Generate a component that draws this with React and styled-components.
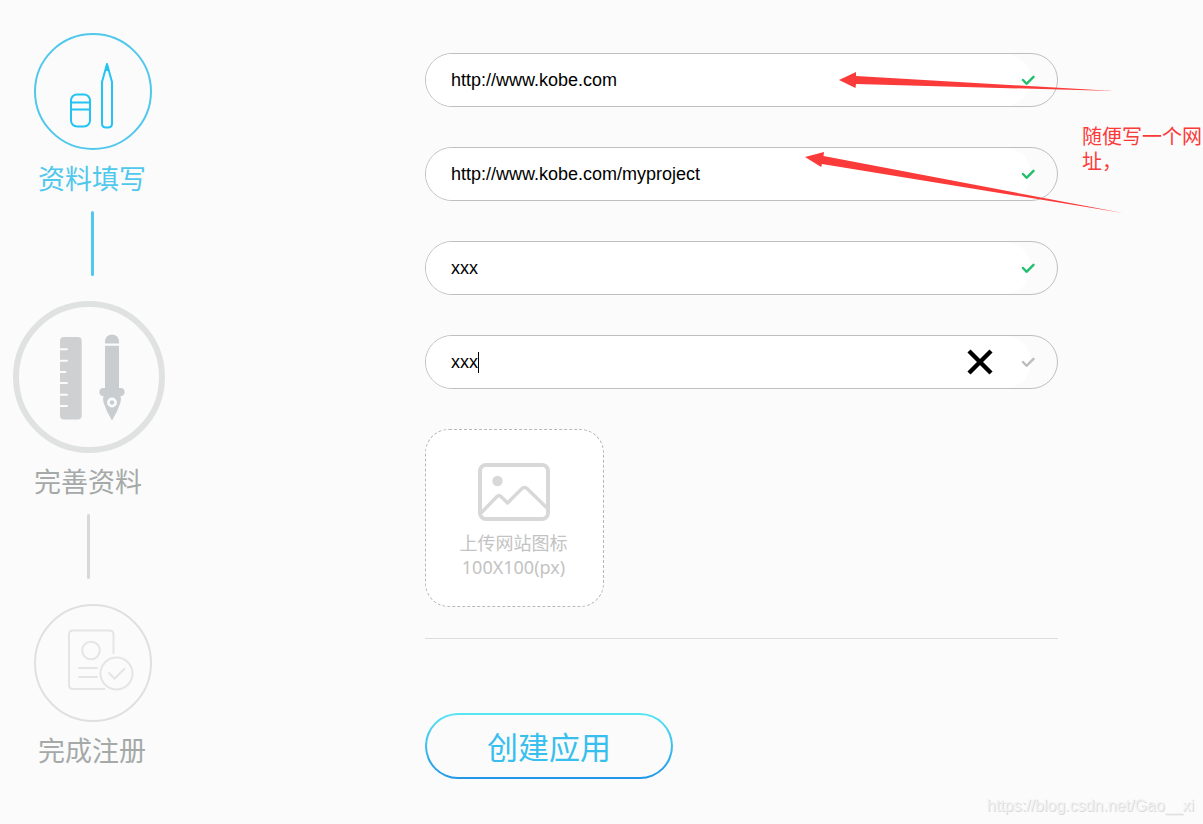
import React, { useState } from "react";
import styled, { createGlobalStyle } from "styled-components";

const GlobalStyle = createGlobalStyle`
  * { box-sizing: border-box; }
  body {
    margin: 0;
    background: #fbfbfb;
    color: #000;
    font-family: "Liberation Sans", "Noto Sans CJK SC", sans-serif;
    overflow-x: hidden;
  }
`;

const Page = styled.div`
  position: relative;
  display: flex;
  align-items: flex-start;
  min-height: 100vh;
`;

const Steps = styled.ol`
  flex: none;
  width: 186px;
  margin: 0;
  padding: 32px 0 0;
  list-style: none;
`;

const Step = styled.li`
  display: flex;
  flex-direction: column;
  align-items: center;
  padding-right: ${(p) => (p.$large ? 8 : 0)}px;
  color: ${(p) => (p.$active ? "#50c8ec" : "#a5a9a8")};
`;

const StepIcon = styled.svg`
  display: block;
  width: ${(p) => p.$size}px;
  height: ${(p) => p.$size}px;
  fill: none;
  stroke-linecap: round;
  stroke-linejoin: round;
`;

const StepLabel = styled.span`
  margin-top: 8px;
  padding-right: 2px;
  font-size: 27px;
  line-height: 40px;
  font-family: "Noto Sans CJK SC", sans-serif;
`;

const Connector = styled.span`
  width: 3px;
  height: 65px;
  margin: 13px 2px 25px 0;
  border-radius: 2px;
  background: ${(p) => (p.$active ? "#50c8ec" : "#d8d8d8")};
`;

const Form = styled.form`
  position: relative;
  flex: 1;
  min-width: 0;
  margin: 53px 145px 46px 239px;
`;

const Fields = styled.div`
  display: flex;
  flex-direction: column;
  gap: 40px;
`;

const Field = styled.div`
  position: relative;
  display: flex;
  height: 54px;
  padding-right: 26px;
  border: 1px solid #bfbfbf;
  border-radius: 27px;
`;

const FieldInner = styled.div`
  flex: 1;
  min-width: 0;
  display: flex;
  align-items: center;
  padding: 0 34px 0 25px;
  border-radius: 26px;
  background: #fff;
`;

const TextInput = styled.input`
  flex: ${(p) => (p.$editing ? "none" : 1)};
  field-sizing: ${(p) => (p.$editing ? "content" : "fixed")};
  min-width: 0;
  max-width: 100%;
  height: 50px;
  padding: 0;
  border: 0;
  outline: 0;
  background: transparent;
  color: #000;
  font: 18px "Liberation Sans", sans-serif;
`;

const Caret = styled.span`
  width: 1px;
  height: 21px;
  background: #000;
`;

const ClearButton = styled.button`
  display: flex;
  margin-left: auto;
  padding: 4px;
  border: 0;
  background: none;
  cursor: pointer;
`;

const Tick = styled.svg`
  position: absolute;
  top: 20px;
  right: 22px;
  width: 14px;
  height: 12px;
  fill: none;
  stroke: ${(p) => (p.$valid ? "#22bf6c" : "#bdbdbd")};
  stroke-width: 2.4;
  stroke-linecap: round;
  stroke-linejoin: round;
`;

const Upload = styled.button`
  display: flex;
  flex-direction: column;
  align-items: center;
  align-self: flex-start;
  width: 179px;
  height: 178px;
  padding: 33px 2px 0 0;
  border: 1px dashed #b8b8b8;
  border-radius: 24px;
  background: #fff;
  color: #c3c3c3;
  font-family: "Noto Sans", "Noto Sans CJK SC", sans-serif;
  font-size: 18px;
  line-height: 24px;
  cursor: pointer;
`;

const PictureIcon = styled.svg`
  width: 72px;
  height: 58px;
  margin-bottom: 10px;
  fill: none;
  stroke: #d8d8d8;
  stroke-width: 4;
  stroke-linejoin: round;
`;

const Divider = styled.hr`
  margin: 31px 0 74px;
  border: 0;
  border-top: 1px solid #dcdcdc;
`;

const SubmitButton = styled.button`
  width: 248px;
  height: 66px;
  padding: 0;
  border: 2px solid transparent;
  border-radius: 33px;
  background:
    linear-gradient(#fbfbfb, #fbfbfb) padding-box,
    linear-gradient(#58e6f2, #2196e8) border-box;
  color: #38bfee;
  font-family: "Noto Sans CJK SC", sans-serif;
  font-size: 31px;
  line-height: 40px;
  cursor: pointer;
`;

const Arrows = styled.svg`
  position: absolute;
  top: 17px;
  right: -67px;
  width: 320px;
  height: 145px;
  fill: #fb3a3a;
  pointer-events: none;
`;

const Note = styled.p`
  position: absolute;
  top: 70px;
  right: -145px;
  width: 121px;
  margin: 0;
  color: #fb3a3a;
  font-family: "Noto Sans CJK SC", serif;
  font-size: 20px;
  line-height: 25px;
`;

const Watermark = styled.span`
  position: absolute;
  right: 9px;
  bottom: 9px;
  color: #f2f2f2;
  font-size: 16px;
  line-height: 20px;
  text-shadow: 1px 1px 0 #dadada;
`;

function StationeryIcon() {
  return (
    <StepIcon $size={118} viewBox="34 32 118 118" stroke="#21c4f3" strokeWidth="2" aria-hidden="true">
      <ellipse cx="93" cy="91.500" rx="58" ry="57.500" stroke="#50c8ec" />
      <rect x="71" y="94.500" width="19" height="32" rx="6" />
      <path d="M71 102.500h19M71 109.500h19" />
      <path d="M102 82v41.500q0 4 4 4h2q4 0 4-4V82L107 64z" />
      <path d="M105 71L107 63l2 8z" fill="#21c4f3" stroke="none" />
    </StepIcon>
  );
}

function DraftingIcon() {
  return (
    <StepIcon $size={152} viewBox="13 301 152 152" aria-hidden="true">
      <circle cx="89" cy="377" r="73" stroke="#e0e2e1" strokeWidth="6" />
      <rect x="60" y="337" width="21.700" height="82.500" rx="4" fill="#cfd0d2" />
      <path
        d="M60 349.300h7M60 360.700h7M60 372h5.500M60 383h7M60 394.700h7M60 406h7"
        stroke="#fbfbfb"
        strokeWidth="2"
      />
      <g fill="#c9cdd0">
        <path d="M105 343.500v-2a7 7 0 0 1 14 0v2z" />
        <path d="M105 345.800h14V388h1.500a4 4 0 0 1 0 8.200q1 3 0 6.300-3 9-8.500 18-5.500-9-8.500-18-1-3.300 0-6.300a4 4 0 0 1 0-8.200h1.500z" />
      </g>
      <circle cx="112" cy="402.500" r="3.600" stroke="#fbfbfb" strokeWidth="2.600" />
    </StepIcon>
  );
}

function RegisteredIcon() {
  return (
    <StepIcon $size={118} viewBox="34 604 118 118" stroke="#e5e5e5" strokeWidth="2" aria-hidden="true">
      <circle cx="93" cy="663" r="58" stroke="#e0e0e0" />
      <path d="M113.500 653v-18.500q0-4-4-4H73q-4 0-4 4V685q0 4 4 4h31.500" />
      <circle cx="91" cy="650.500" r="8.800" />
      <path d="M79 668h18M79 677h18" />
      <circle cx="116.500" cy="673.500" r="16" />
      <path d="M109 673l5.500 5.800 10-10" />
    </StepIcon>
  );
}

function ValidatedField({ label, initial, valid, editing }) {
  const [value, setValue] = useState(initial);
  return (
    <Field>
      <FieldInner>
        <TextInput
          type="text"
          aria-label={label}
          value={value}
          $editing={editing}
          onChange={(e) => setValue(e.target.value)}
        />
        {editing && <Caret />}
        {editing && (
          <ClearButton type="button" aria-label="清除" onClick={() => setValue("")}>
            <svg width="26" height="26" viewBox="0 0 26 26" stroke="#000" strokeWidth="4.400" aria-hidden="true">
              <path d="M2 2l22 22M24 2L2 24" />
            </svg>
          </ClearButton>
        )}
      </FieldInner>
      <Tick $valid={valid} viewBox="0 0 14 12" aria-hidden="true">
        <path d="M2 6l3.500 3.800L12.500 2.800" />
      </Tick>
    </Field>
  );
}

export default function App() {
  return (
    <>
      <GlobalStyle />
      <Page>
        <Steps>
          <Step $active>
            <StationeryIcon />
            <StepLabel>资料填写</StepLabel>
            <Connector $active />
          </Step>
          <Step $large>
            <DraftingIcon />
            <StepLabel>完善资料</StepLabel>
            <Connector />
          </Step>
          <Step>
            <RegisteredIcon />
            <StepLabel>完成注册</StepLabel>
          </Step>
        </Steps>
        <Form onSubmit={(e) => e.preventDefault()}>
          <Fields>
            <ValidatedField label="网站地址" initial="http://www.kobe.com" valid />
            <ValidatedField label="回调地址" initial="http://www.kobe.com/myproject" valid />
            <ValidatedField label="提供方" initial="xxx" valid />
            <ValidatedField label="备案号" initial="xxx" editing />
            <Upload type="button">
              <PictureIcon viewBox="0 0 72 58" aria-hidden="true">
                <rect x="2" y="2" width="68" height="54" rx="6" />
                <circle cx="19.500" cy="18" r="5.200" fill="#d8d8d8" stroke="none" />
                <path d="M3 50l16-16.500q2-2 4 0l6.500 6.500L44 25.500q2.500-2 5 0L70 46" strokeWidth="3.400" />
              </PictureIcon>
              <span>上传网站图标</span>
              <span>100X100(px)</span>
            </Upload>
          </Fields>
          <Divider />
          <SubmitButton type="submit">创建应用</SubmitButton>
          <Arrows viewBox="805 70 320 145" aria-hidden="true">
            <path d="M839 80l17-8v4l258 15-258-7-.500 4z" />
            <path d="M805 157l19-5-.500 4L1123 213 822 164l-.800 3z" />
          </Arrows>
          <Note>随便写一个网址，</Note>
        </Form>
        <Watermark>https://blog.csdn.net/Gao__xi</Watermark>
      </Page>
    </>
  );
}
